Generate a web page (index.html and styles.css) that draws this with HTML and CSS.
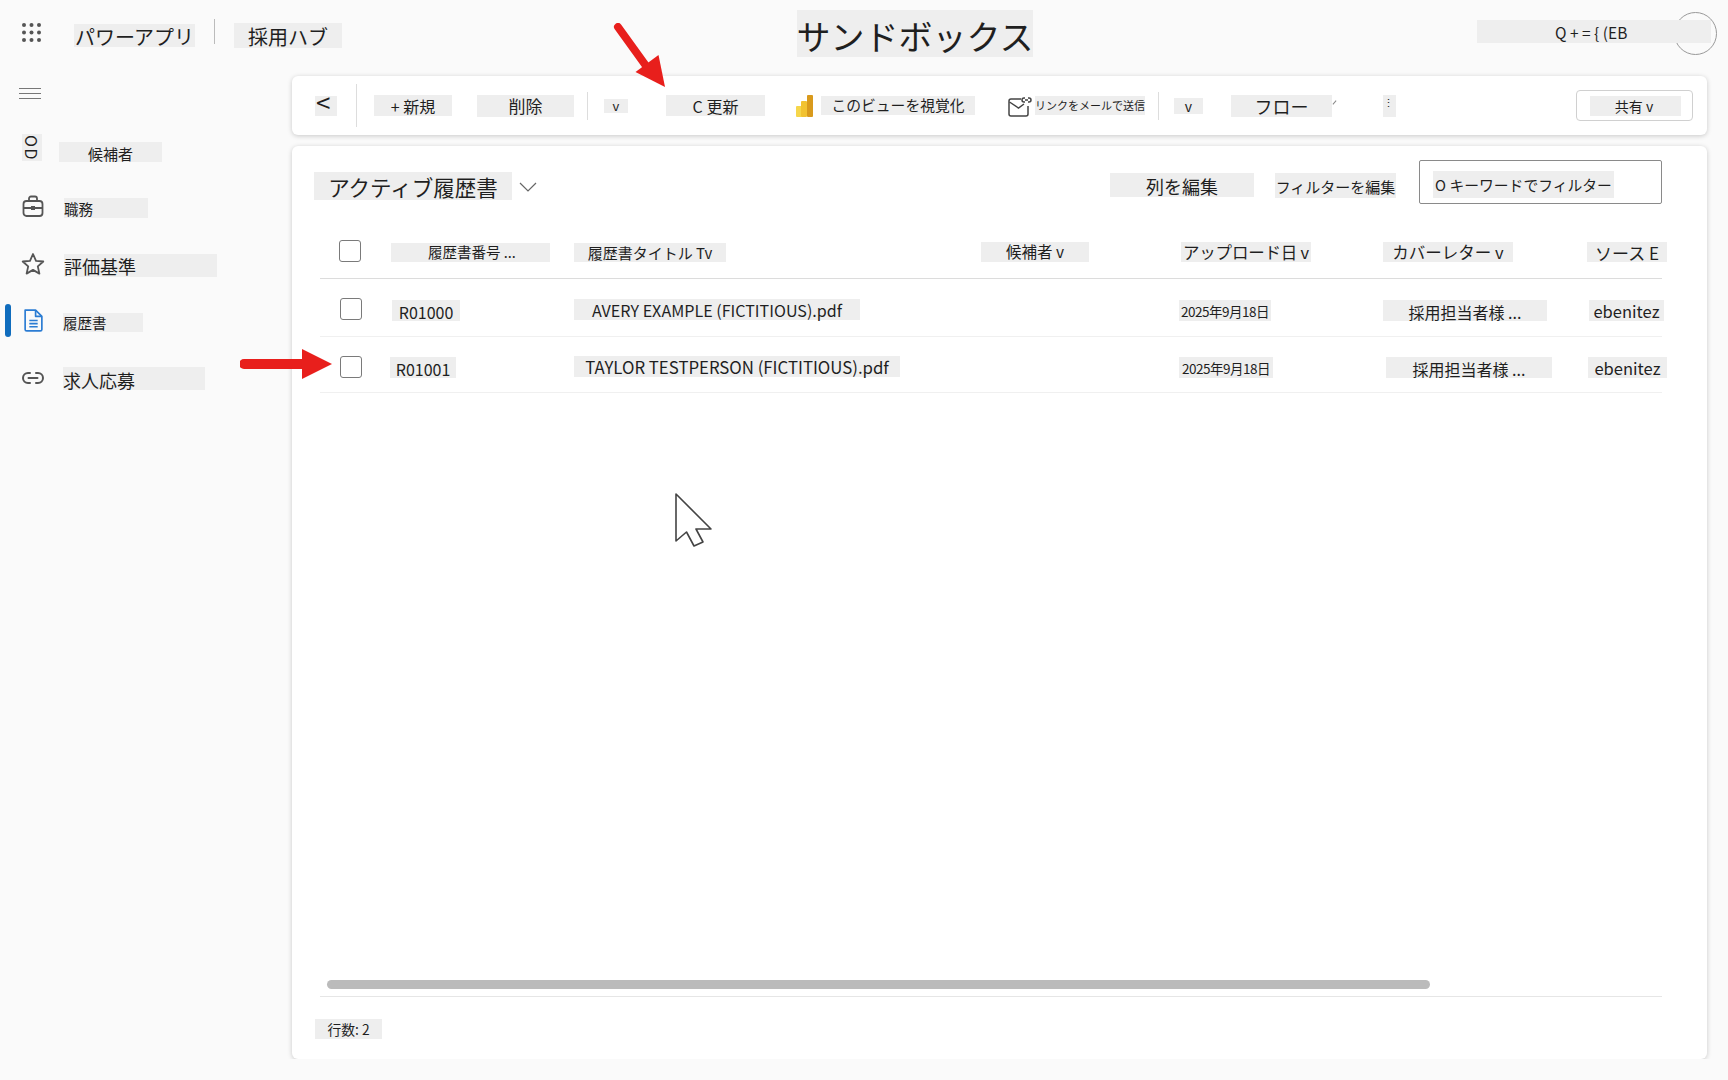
FILE: index.html
```html
<!DOCTYPE html>
<html lang="ja">
<head>
<meta charset="utf-8">
<title>サンドボックス</title>
<link rel="stylesheet" href="styles.css">
</head>
<body>

<header class="topbar">
	<svg class="waffle" width="21" height="21" viewBox="0 0 21 21" fill="#555">
		<circle cx="3" cy="3" r="2"/><circle cx="10.5" cy="3" r="2"/><circle cx="18" cy="3" r="2"/>
		<circle cx="3" cy="10.5" r="2"/><circle cx="10.5" cy="10.5" r="2"/><circle cx="18" cy="10.5" r="2"/>
		<circle cx="3" cy="18" r="2"/><circle cx="10.5" cy="18" r="2"/><circle cx="18" cy="18" r="2"/>
	</svg>
	<span class="patch app-name">パワーアプリ</span>
	<span class="top-divider"></span>
	<span class="patch hub-name">採用ハブ</span>
	<span class="patch env-name">サンドボックス</span>
	<span class="avatar"></span>
	<span class="patch top-actions">Q + = { (EB</span>
</header>

<div class="layout">
	<nav class="sidebar">
		<div class="hamburger"><span></span><span></span><span></span></div>
		<a class="nav-item">
			<span class="patch nav-icon-text"><span>OD</span></span>
			<span class="patch nav-candidates">候補者</span>
		</a>
		<a class="nav-item">
			<svg class="nav-icon icon-case" width="24" height="24" viewBox="0 0 24 24" fill="none" stroke="#555" stroke-width="1.8">
				<rect x="2.500" y="7" width="19" height="15" rx="3"/>
				<path d="M8 7V4.500A2 2 0 0 1 10 2.500h4A2 2 0 0 1 16 4.500V7M2.500 14h19"/>
				<rect x="10" y="12" width="4" height="4" fill="#555" stroke="none"/>
			</svg>
			<span class="patch nav-jobs">職務</span>
		</a>
		<a class="nav-item">
			<svg class="nav-icon icon-star" width="24" height="24" viewBox="0 0 24 24" fill="none" stroke="#555" stroke-width="1.8" stroke-linejoin="round">
				<path d="M12 2l3 6.800 7.300.7-5.500 4.900 1.600 7.200L12 17.900l-6.400 3.700 1.600-7.200L1.700 9.500 9 8.800z"/>
			</svg>
			<span class="patch nav-criteria">評価基準</span>
		</a>
		<a class="nav-item active">
			<svg class="nav-icon icon-doc" width="19" height="23" viewBox="3 1 18 22" fill="none" stroke="#2b7cd3" stroke-width="1.600" stroke-linejoin="round">
				<path d="M4 2h10l6 6v12.500a1.500 1.500 0 0 1-1.500 1.500h-13A1.500 1.500 0 0 1 4 20.500z"/>
				<path d="M14 2V8h6M8 12h8M8 15h8M8 18h8"/>
			</svg>
			<span class="patch nav-resumes">履歴書</span>
		</a>
		<a class="nav-item">
			<svg class="nav-icon icon-link" width="24" height="24" viewBox="0 0 24 24" fill="none" stroke="#555" stroke-width="2" stroke-linecap="round">
				<path d="M9 7H7a5 5 0 0 0 0 10h2M15 7h2a5 5 0 0 1 0 10h-2M7.500 12h9"/>
			</svg>
			<span class="patch nav-apply">求人応募</span>
		</a>
	</nav>

	<main class="main">
		<div class="card toolbar">
			<span class="patch tb-back">&lt;</span>
			<span class="tb-divider tb-div1"></span>
			<span class="patch tb-new">+ 新規</span>
			<span class="patch tb-delete">削除</span>
			<span class="tb-divider tb-div2"></span>
			<span class="patch tb-v1">v</span>
			<span class="patch tb-refresh">C 更新</span>
			<svg class="tb-bi" width="17" height="22" viewBox="0 0 17 22">
				<rect x="0" y="11" width="6" height="11" rx="1" fill="#f6d64b"/>
				<rect x="5" y="6" width="6" height="16" rx="1" fill="#f2c230"/>
				<rect x="11" y="0" width="6" height="22" rx="1" fill="#d99a1c"/>
			</svg>
			<span class="patch tb-visual">このビューを視覚化</span>
			<svg class="tb-mail" width="24" height="22" viewBox="0 0 24 22" fill="none" stroke="#444" stroke-width="1.500">
				<path d="M13 4H3a2 2 0 0 0-2 2v13a2 2 0 0 0 2 2h15a2 2 0 0 0 2-2v-8"/>
				<path d="M1.500 7l9 6 5.500-4"/>
				<path d="M17 3h-1a1.500 1.500 0 0 0 0 4h1M20 3h1a1.500 1.500 0 0 1 0 4h-1M17 5h3"/>
			</svg>
			<span class="patch tb-link">リンクをメールで送信</span>
			<span class="tb-divider tb-div3"></span>
			<span class="patch tb-v2">v</span>
			<span class="patch tb-flow">フロー</span>
			<span class="tb-tick"></span>
			<span class="patch tb-more">⋮</span>
			<button class="share"><span class="patch share-label">共有 v</span></button>
		</div>

		<section class="card list">
			<div class="list-head">
				<span class="patch view-title">アクティブ履歴書</span>
				<svg class="view-chevron" width="18" height="10" viewBox="0 0 18 10" fill="none" stroke="#666" stroke-width="1.200"><path d="M1 1l8 8 8-8"/></svg>
				<span class="patch edit-cols">列を編集</span>
				<span class="patch edit-filters">フィルターを編集</span>
				<div class="filter-box"><span class="patch filter-text">O キーワードでフィルター</span></div>
			</div>

			<div class="row row-header">
				<div class="cell"><span class="check"></span></div>
				<div class="cell"><span class="patch h-num">履歴書番号 ...</span></div>
				<div class="cell"><span class="patch h-title">履歴書タイトル Tv</span></div>
				<div class="cell"><span class="patch h-cand">候補者 v</span></div>
				<div class="cell"><span class="patch h-date">アップロード日 v</span></div>
				<div class="cell"><span class="patch h-cover">カバーレター v</span></div>
				<div class="cell"><span class="patch h-src">ソース E</span></div>
			</div>
			<div class="row row-one">
				<div class="cell"><span class="check"></span></div>
				<div class="cell"><span class="patch d-num">R01000</span></div>
				<div class="cell"><span class="patch d-title1">AVERY EXAMPLE (FICTITIOUS).pdf</span></div>
				<div class="cell"></div>
				<div class="cell"><span class="patch d-date">2025年9月18日</span></div>
				<div class="cell"><span class="patch d-cover">採用担当者様 ...</span></div>
				<div class="cell"><span class="patch d-src">ebenitez</span></div>
			</div>
			<div class="row row-two">
				<div class="cell"><span class="check"></span></div>
				<div class="cell"><span class="patch d-num2">R01001</span></div>
				<div class="cell"><span class="patch d-title2">TAYLOR TESTPERSON (FICTITIOUS).pdf</span></div>
				<div class="cell"></div>
				<div class="cell"><span class="patch d-date d-date2">2025年9月18日</span></div>
				<div class="cell"><span class="patch d-cover d-cover2">採用担当者様 ...</span></div>
				<div class="cell"><span class="patch d-src d-src2">ebenitez</span></div>
			</div>

			<div class="scroll-area"><div class="scroll-thumb"></div></div>
			<div class="list-foot"><span class="patch row-count">行数: 2</span></div>
		</section>
	</main>
</div>

<!-- annotations on top of the screenshot -->
<svg class="mark mark-top" width="56" height="68" viewBox="0 0 56 68">
	<path d="M5 4L36 47" stroke="#e81f1c" stroke-width="8" stroke-linecap="round" fill="none"/>
	<path d="M52 64L22.500 49 45.500 32z" fill="#e81f1c"/>
</svg>
<svg class="mark mark-side" width="92" height="30" viewBox="0 0 92 30">
	<path d="M4 15H66" stroke="#e81f1c" stroke-width="10" stroke-linecap="round" fill="none"/>
	<path d="M62 0L92 15 62 30z" fill="#e81f1c"/>
</svg>
<svg class="mark mark-cursor" width="38" height="55" viewBox="0 0 38 55">
	<path d="M1 1V48L11.500 39 19 53 28 49 21 36H36z" fill="#fff" stroke="#444" stroke-width="1.600" stroke-linejoin="round"/>
</svg>

</body>
</html>
```

FILE: styles.css
```css
* {
	box-sizing: border-box;
}

body {
	margin: 0;
	background: #fafafa;
	color: #1f1f1f;
	font-family: "Noto Sans CJK JP", "Noto Sans", sans-serif;
	overflow: hidden;
}

/* gray label behind each text */
.patch {
	display: flex;
	align-items: center;
	justify-content: center;
	flex-shrink: 0;
	padding-top: 2px;
	background: #eeeeee;
	line-height: 1;
	white-space: nowrap;
}

/* top bar */
.topbar {
	position: relative;
	display: flex;
	align-items: flex-start;
	height: 76px;
}

.waffle {
	margin: 22px 0 0 21px;
}

.app-name {
	width: 121px;
	height: 23px;
	margin: 24px 0 0 32px;
	font-size: 20px;
}

.top-divider {
	width: 1px;
	height: 25px;
	margin: 19px 0 0 19px;
	background: #bbb;
}

.hub-name {
	width: 108px;
	height: 25px;
	margin: 23px 0 0 19px;
	font-size: 20px;
}

.env-name {
	width: 236px;
	height: 47px;
	margin: 10px 0 0 455px;
	padding-top: 5px;
	font-size: 34px;
}

.avatar {
	position: absolute;
	left: 1674px;
	top: 12px;
	width: 43px;
	height: 43px;
	border: 1.5px solid #999;
	border-radius: 50%;
}

.top-actions {
	position: relative;
	width: 234px;
	height: 23px;
	margin: 20px 0 0 444px;
	padding-left: 78px;
	justify-content: flex-start;
	font-size: 15.500px;
}

/* sidebar */
.layout {
	display: flex;
}

.sidebar {
	width: 292px;
	flex-shrink: 0;
}

.hamburger {
	width: 22px;
	height: 11px;
	margin: 12px 0 25px 19px;
	display: flex;
	flex-direction: column;
	justify-content: space-between;
}

.hamburger span {
	height: 1px;
	background: #777;
}

.nav-item {
	position: relative;
	display: flex;
	align-items: center;
	height: 56px;
	padding-left: 21px;
}

.nav-item.active::before {
	content: "";
	position: absolute;
	left: 5px;
	top: 12px;
	width: 6px;
	height: 33px;
	border-radius: 3px;
	background: #0f6cbd;
}

.nav-icon {
	flex-shrink: 0;
}

.icon-case { margin-top: -4px; }
.icon-star { margin-top: 0; }
.icon-doc { margin: 1px 0 0 3px; }
.icon-link { margin-top: 3px; }

.nav-icon-text {
	width: 20px;
	height: 27px;
	margin: -10px 0 0 1px;
}

.nav-icon-text span {
	transform: rotate(90deg);
	font-size: 16px;
	letter-spacing: 1.500px;
}

.nav-candidates {
	width: 103px;
	height: 20px;
	margin-left: 17px;
	font-size: 15px;
}

.nav-jobs {
	width: 84px;
	height: 20px;
	margin: 0 0 0 19px;
	justify-content: flex-start;
	font-size: 14.500px;
}

.nav-criteria {
	width: 153px;
	height: 23px;
	margin: 2px 0 0 19px;
	justify-content: flex-start;
	font-size: 18px;
}

.nav-resumes {
	width: 80px;
	height: 19px;
	margin: 5px 0 0 20px;
	justify-content: flex-start;
	font-size: 14.500px;
}

.nav-apply {
	width: 142px;
	height: 23px;
	margin: 5px 0 0 18px;
	justify-content: flex-start;
	font-size: 18px;
}

/* main column */
.main {
	width: 1415px;
	flex-shrink: 0;
	display: flex;
	flex-direction: column;
	gap: 11px;
}

.card {
	background: #fff;
	border-radius: 6px;
	box-shadow: 0 1px 5px rgba(0, 0, 0, 0.2);
}

.toolbar {
	display: flex;
	align-items: center;
	height: 59px;
	font-size: 16px;
}

.toolbar .patch {
	padding-top: 0;
}

.tb-divider {
	width: 1px;
	height: 43px;
	background: #ddd;
	flex-shrink: 0;
}

.tb-div2, .tb-div3 {
	height: 28px;
}

.toolbar .tb-back {
	width: 22px;
	height: 20px;
	margin-left: 23px;
	padding: 0 0 7px 1px;
	font-size: 26px;
	justify-content: flex-start;
}

.tb-div1 { margin-left: 19px; }

.tb-new {
	width: 78px;
	height: 21px;
	margin-left: 17px;
}

.tb-delete {
	width: 97px;
	height: 22px;
	margin-left: 25px;
	font-size: 17px;
}

.tb-div2 { margin-left: 13px; }

.tb-v1 {
	width: 24px;
	height: 14px;
	margin-left: 16px;
	font-size: 13px;
}

.tb-refresh {
	width: 99px;
	height: 21px;
	margin-left: 38px;
}

.tb-bi {
	margin-left: 31px;
	flex-shrink: 0;
}

.tb-visual {
	width: 154px;
	height: 19px;
	margin-left: 8px;
	font-size: 14.800px;
}

.tb-mail {
	margin-left: 33px;
	flex-shrink: 0;
}

.tb-link {
	width: 110px;
	height: 19px;
	margin-left: 3px;
	font-size: 11px;
}

.tb-div3 { margin-left: 13px; }

.tb-v2 {
	width: 29px;
	height: 16px;
	margin-left: 15px;
	font-size: 14px;
}

.tb-flow {
	width: 101px;
	height: 22px;
	margin-left: 28px;
	font-size: 18px;
}

.tb-tick {
	width: 5px;
	height: 1px;
	margin: -6px 0 0 0;
	background: #888;
	transform: rotate(-50deg);
}

.toolbar .tb-more {
	width: 13px;
	height: 22px;
	margin-left: 46px;
	padding: 0 3px 6px 0;
	font-size: 11px;
}

.share {
	display: block;
	width: 117px;
	height: 31px;
	margin: 0 14px 0 auto;
	padding: 0 0 0 13px;
	background: #fff;
	border: 1px solid #d0d0d0;
	border-radius: 4px;
	font: inherit;
	color: inherit;
}

.toolbar .share-label {
	width: 91px;
	height: 20px;
	font-size: 14px;
	padding-right: 3px;
}

/* list card */
.list {
	height: 913px;
	padding: 0 45px 0 28px;
	display: flex;
	flex-direction: column;
}

.list-head {
	position: relative;
	display: flex;
	align-items: flex-start;
	height: 80px;
	margin-left: -6px;
}

.view-title {
	width: 198px;
	height: 28px;
	margin-top: 26px;
	font-size: 21.500px;
}

.view-chevron {
	margin: 36px 0 0 7px;
}

.edit-cols {
	width: 144px;
	height: 24px;
	margin: 27px 0 0 573px;
	font-size: 18px;
}

.edit-filters {
	width: 121px;
	height: 25px;
	margin: 27px 0 0 21px;
	font-size: 15px;
}

.filter-box {
	width: 243px;
	height: 44px;
	margin: 14px 0 0 23px;
	padding: 10px 0 0 13px;
	border: 1px solid #8a8a8a;
	border-radius: 2px;
}

.filter-text {
	width: 181px;
	height: 27px;
	font-size: 14.800px;
}

.row {
	display: grid;
	grid-template-columns: 70px 184px 407px 198px 204px 204px 75px;
	border-bottom: 1px solid #f0f0f0;
}

.cell {
	display: flex;
	align-items: center;
	min-width: 0;
}

.row-header {
	height: 53px;
	border-bottom: 1px solid #dcdcdc;
	font-size: 14.500px;
}

.row-header .patch {
	padding-top: 0;
}

.row-header .check {
	margin: -2px 0 0 19px;
}

.row-one {
	height: 58px;
	font-size: 16px;
}

.row-two {
	height: 56px;
	padding-top: 3px;
	font-size: 16px;
}

.check {
	display: block;
	width: 22px;
	height: 22px;
	margin: 2px 0 0 20px;
	border: 1px solid #7a7a7a;
	border-radius: 3px;
}

.h-num { width: 159px; height: 19px; justify-content: flex-start; margin-left: 1px; }
.row-header .h-num { padding-left: 37px; }
.h-title { width: 152px; height: 19px; font-size: 15px; }
.h-cand { width: 108px; height: 20px; font-size: 15.500px; }
.h-date { width: 130px; height: 20px; margin-left: 2px; font-size: 16.500px; letter-spacing: -0.2px; }
.h-cover { width: 130px; height: 20px; font-size: 16.500px; }
.h-src { width: 80px; height: 20px; font-size: 17px; }

.d-num { width: 68px; height: 21px; margin: 6px 0 0 2px; }
.d-num2 { width: 66px; height: 21px; margin-top: 3px; }
.d-title1 { width: 286px; height: 21px; margin-top: 4px; font-size: 16.100px; }
.d-title2 { width: 326px; height: 21px; font-size: 16.800px; }
.d-date { width: 92px; height: 21px; margin-top: 6px; font-size: 13.500px; letter-spacing: -0.5px; }
.d-date2 { width: 94px; margin-top: 3px; }
.d-cover { width: 164px; height: 21px; margin-top: 6px; font-size: 16px; }
.d-cover2 { width: 166px; margin: 3px 0 0 3px; }
.d-src { width: 75px; height: 21px; margin: 6px 0 0 2px; font-size: 16.500px; }
.d-src2 { width: 79px; margin: 3px 0 0 1px; }

.scroll-area {
	margin-top: auto;
	height: 9px;
	padding-left: 7px;
}

.scroll-thumb {
	width: 1103px;
	height: 9px;
	border-radius: 5px;
	background: #bbbbbb;
}

.list-foot {
	height: 63px;
	margin-top: 7px;
	padding-top: 22px;
	border-top: 1px solid #e6e6e6;
}

.row-count {
	width: 67px;
	height: 20px;
	margin-left: -5px;
	font-size: 13.800px;
}

/* arrows and mouse pointer */
.mark {
	position: absolute;
}

.mark-top {
	left: 613px;
	top: 23px;
}

.mark-side {
	left: 240px;
	top: 349px;
}

.mark-cursor {
	left: 675px;
	top: 493px;
}
```
